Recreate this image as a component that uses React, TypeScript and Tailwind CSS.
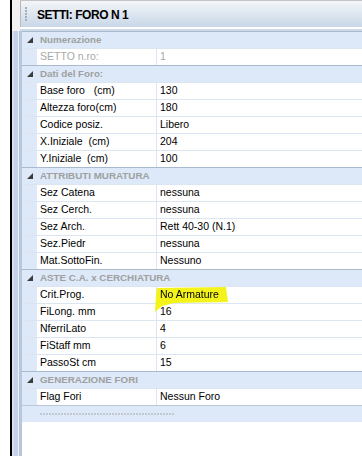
import React from 'react'

type Row =
  | { kind: 'cat'; label: string }
  | { kind: 'row'; label: string; value: string; muted?: boolean; mark?: boolean }
  | { kind: 'end' }

const rows: Row[] = [
  { kind: 'cat', label: 'Numerazione' },
  { kind: 'row', label: 'SETTO n.ro:', value: '1', muted: true },
  { kind: 'cat', label: 'Dati del Foro:' },
  { kind: 'row', label: 'Base foro   (cm)', value: '130' },
  { kind: 'row', label: 'Altezza foro(cm)', value: '180' },
  { kind: 'row', label: 'Codice posiz.', value: 'Libero' },
  { kind: 'row', label: 'X.Iniziale  (cm)', value: '204' },
  { kind: 'row', label: 'Y.Iniziale  (cm)', value: '100' },
  { kind: 'cat', label: 'ATTRIBUTI MURATURA' },
  { kind: 'row', label: 'Sez Catena', value: 'nessuna' },
  { kind: 'row', label: 'Sez Cerch.', value: 'nessuna' },
  { kind: 'row', label: 'Sez Arch.', value: 'Rett 40-30 (N.1)' },
  { kind: 'row', label: 'Sez.Piedr', value: 'nessuna' },
  { kind: 'row', label: 'Mat.SottoFin.', value: 'Nessuno' },
  { kind: 'cat', label: 'ASTE C.A. x CERCHIATURA' },
  { kind: 'row', label: 'Crit.Prog.', value: 'No Armature', mark: true },
  { kind: 'row', label: 'FiLong. mm', value: '16' },
  { kind: 'row', label: 'NferriLato', value: '4' },
  { kind: 'row', label: 'FiStaff mm', value: '6' },
  { kind: 'row', label: 'PassoSt cm', value: '15' },
  { kind: 'cat', label: 'GENERAZIONE FORI' },
  { kind: 'row', label: 'Flag Fori', value: 'Nessun Foro' },
  { kind: 'end' },
]

const Arrow = () => (
  <svg width="6" height="6" viewBox="0 0 6 6">
    <polygon points="6,0 6,6 0,6" fill="#3c3c3c" />
  </svg>
)

export default function App() {
  return (
    <div
      className="flex h-[456px] w-[362px] overflow-hidden bg-white text-[10.5px] text-black"
      style={{ fontFamily: '"Liberation Sans", Arial, sans-serif' }}
    >
      <div className="w-[10px] bg-white" />
      <div className="w-[2px] bg-black" />
      <div className="flex w-[8px] flex-col">
        <div className="h-[31px] bg-[#f2f2f2]" />
        <div className="flex flex-1">
          <div className="w-[2px] bg-[#d6e0ee]" />
          <div className="w-[4px] bg-[#c3d2e7]" />
          <div className="w-[1px] bg-[#eef3f9]" />
          <div className="w-[1px] bg-[#b3c3d9]" />
        </div>
      </div>

      <div className="flex flex-1 flex-col">
        {/* header */}
        <div className="flex flex-col">
          <div className="h-px bg-[#c4c4c4]" />
          <div className="flex h-[26px] items-center border-l border-[#b9b9b9] bg-gradient-to-b from-[#f3f5f9] to-[#c8d7e7]">
            <div className="ml-[4px] flex flex-col gap-[1px]">
              {[0, 1, 2, 3, 4].map(i => (
                <div key={i} className="h-[2px] w-[2px] bg-[#a3adbb]" />
              ))}
            </div>
            <span className="ml-[10px] mt-[2px] text-[12px] font-bold tracking-[-0.45px]">SETTI: FORO N 1</span>
          </div>
          <div className="h-[2px] bg-white" />
          <div className="h-[2px] bg-[#cddaea]" />
        </div>

        {/* grid */}
        <div className="flex flex-1">
          <div className="w-[2px] bg-[#b7c7dc]" />
          <div className="flex flex-1 flex-col">
            {rows.map((r, i) => {
              if (r.kind === 'cat') {
                return (
                  <div
                    key={i}
                    className="flex h-[17px] items-center border-t border-[#a9b9ce] bg-[#dde9f8]"
                  >
                    <div className="flex w-[15px] justify-center">
                      <Arrow />
                    </div>
                    <span className="ml-[3px] text-[9.8px] font-bold text-[#a0a0a0]">{r.label}</span>
                  </div>
                )
              }
              if (r.kind === 'end') {
                return (
                  <div key={i} className="flex h-[17px] items-center border-t border-[#b9c7d9] bg-[#dde9f8]">
                    <svg className="ml-[18px]" width="135" height="2" viewBox="0 0 135 2">
                      <line x1="0" y1="1" x2="135" y2="1" stroke="#a8a8a8" strokeWidth="1" strokeDasharray="2 1" />
                    </svg>
                  </div>
                )
              }
              return (
                <div key={i} className="flex h-[17px] border-t border-[#dce6f3]">
                  <div className="w-[15px] bg-[#dde9f8]" />
                  <div
                    className={`flex w-[120px] items-center whitespace-pre border-r border-[#dce6f3] bg-white pl-[3px] ${r.muted ? 'text-[#a8a8a8]' : ''}`}
                  >
                    {r.label}
                  </div>
                  <div
                    className={`relative flex flex-1 items-center bg-white pl-[3px] ${r.mark ? 'z-10' : ''} ${r.muted ? 'text-[#a8a8a8]' : ''}`}
                  >
                    {r.mark && (
                      <svg
                        className="absolute left-[-3px] top-0 mix-blend-multiply"
                        width="80"
                        height="27"
                        viewBox="0 0 80 27"
                      >
                        <polygon points="2,8 3,1 72,0 74,15 20,16 8,19 1,25" fill="#f4f41c" />
                      </svg>
                    )}
                    <span className="relative">{r.value}</span>
                  </div>
                </div>
              )
            })}
          </div>
        </div>
      </div>
    </div>
  )
}
